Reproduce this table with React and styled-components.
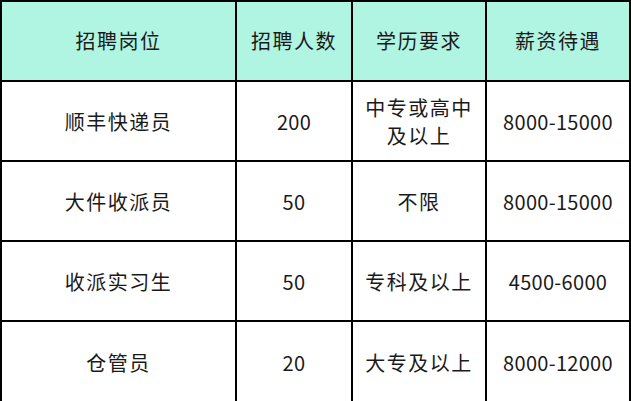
import styled, { createGlobalStyle } from "styled-components";

const GlobalStyle = createGlobalStyle`
  html, body {
    margin: 0;
    padding: 0;
    background: #ffffff;
  }
`;

/* 表格外框：黑色底 + gap 形成网格线 */
const Table = styled.div`
  display: grid;
  grid-template-columns: 233px 114px 132px 142px;
  grid-template-rows: 78px 78px 78px 78px 79px;
  gap: 2px;
  width: 631px;
  height: 401px;
  box-sizing: border-box;
  border: 2px solid #000;
  background: #000;
  font-family: "Noto Sans CJK SC", "Noto Sans", sans-serif;
  font-weight: 400;
  color: #1a1a1a;
`;

const Cell = styled.div`
  display: flex;
  align-items: center;
  justify-content: center;
  text-align: center;
  background: ${(p) => (p.$head ? "#b0f5e2" : "#ffffff")};
  font-size: 20px;
  letter-spacing: ${(p) => (p.$num ? "0.3px" : "1.5px")};
  line-height: 28px;
  padding-top: ${(p) => (p.$head ? "0" : "2px")};
  box-sizing: border-box;
`;

const headers = ["招聘岗位", "招聘人数", "学历要求", "薪资待遇"];

const rows = [
  ["顺丰快递员", "200", "中专或高中\n及以上", "8000-15000"],
  ["大件收派员", "50", "不限", "8000-15000"],
  ["收派实习生", "50", "专科及以上", "4500-6000"],
  ["仓管员", "20", "大专及以上", "8000-12000"],
];

const isNum = (s) => /^[\d-]+$/.test(s);

export default function App() {
  return (
    <>
      <GlobalStyle />
      <Table>
        {headers.map((h) => (
          <Cell key={h} $head>
            {h}
          </Cell>
        ))}
        {rows.map((row, i) =>
          row.map((c, j) => (
            <Cell key={`${i}-${j}`} $num={isNum(c)}>
              <span>
                {c.split("\n").map((line, k) => (
                  <div key={k}>{line}</div>
                ))}
              </span>
            </Cell>
          ))
        )}
      </Table>
    </>
  );
}
